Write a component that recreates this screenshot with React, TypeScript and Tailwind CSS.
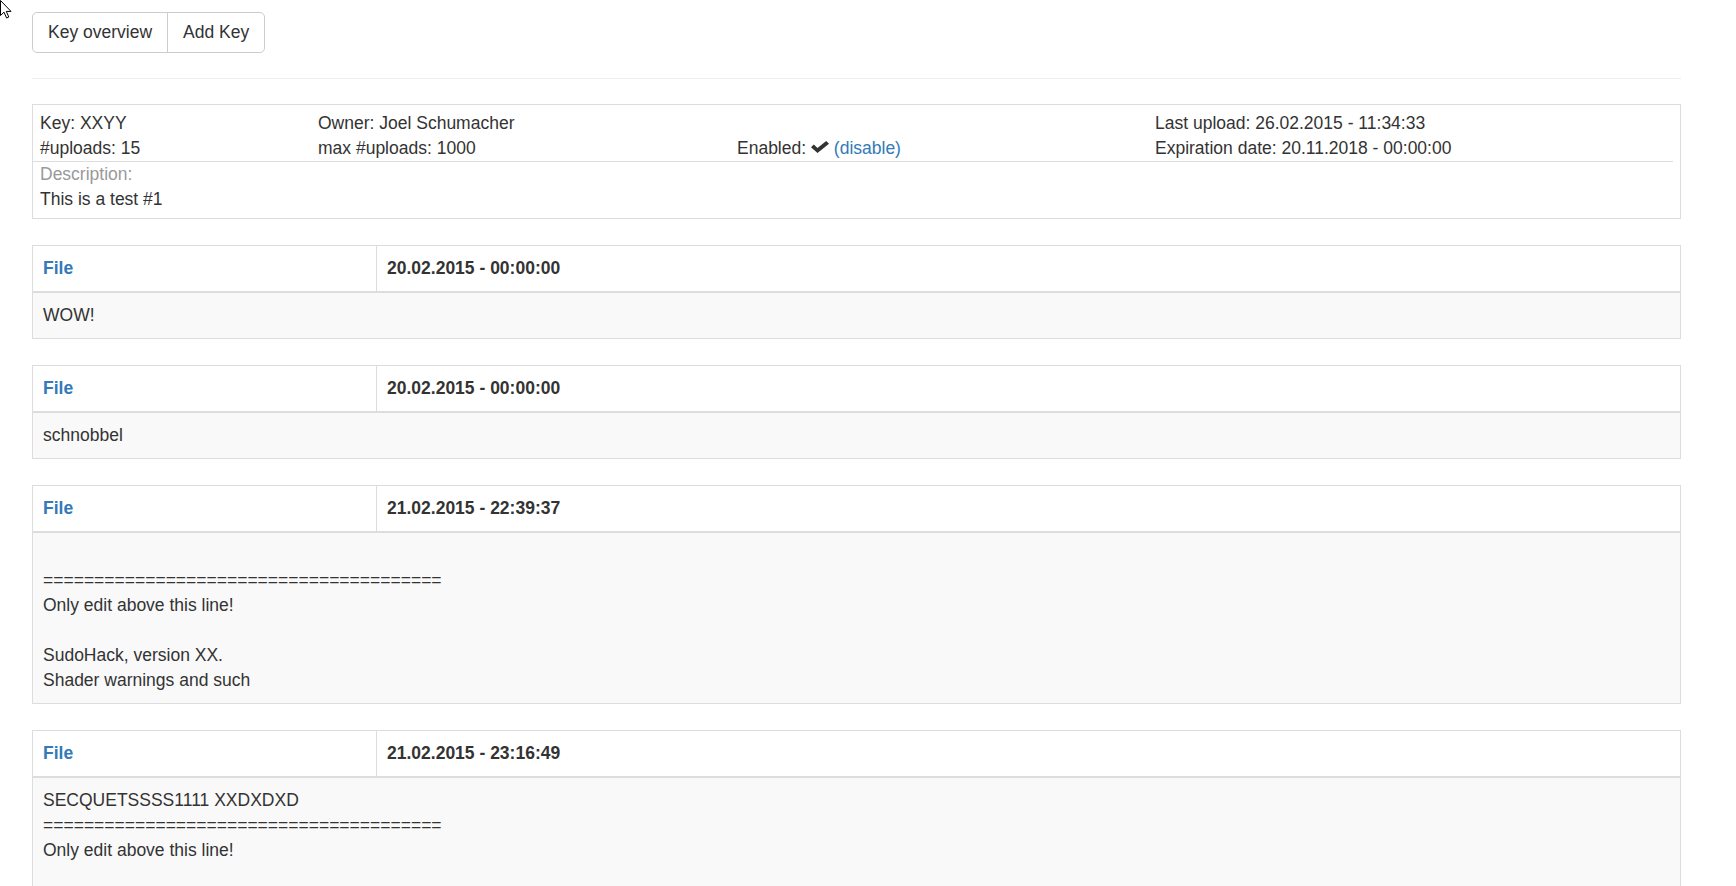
import React from "react";

const EQ = "=======================================";

type Entry = { date: string; lines: string[] };

const entries: Entry[] = [
  { date: "20.02.2015 - 00:00:00", lines: ["WOW!"] },
  { date: "20.02.2015 - 00:00:00", lines: ["schnobbel"] },
  {
    date: "21.02.2015 - 22:39:37",
    lines: ["", EQ, "Only edit above this line!", "", "SudoHack, version XX.", "Shader warnings and such"],
  },
  {
    date: "21.02.2015 - 23:16:49",
    lines: ["SECQUETSSSS1111 XXDXDXD", EQ, "Only edit above this line!", "", ""],
  },
];

function Cursor() {
  return (
    <svg className="absolute left-0 top-0 h-[19px] w-[13px]" viewBox="0 0 13 19">
      <path
        d="M0.5 0.5 L0.5 15.5 L4 12.2 L6.6 18 L8.8 17 L6.3 11.4 L11 11.4 Z"
        fill="#fff"
        stroke="#000"
        strokeWidth="1"
        strokeLinejoin="round"
      />
    </svg>
  );
}

function Check() {
  return (
    <svg className="inline-block h-[12px] w-[18px] align-[1px]" viewBox="0 0 18 12">
      <path d="M0 6.2 L2.8 3.4 L6.5 6.9 L15.2 0 L18 2.8 L6.5 12 Z" fill="#333" />
    </svg>
  );
}

function FilePanel({ entry }: { entry: Entry }) {
  return (
    <div className="mb-[26px] border border-[#ddd]">
      <div className="flex border-b-2 border-[#ddd] bg-white font-bold">
        <div className="w-[344px] border-r border-[#ddd] px-[10px] py-[10px] text-[#337ab7]">File</div>
        <div className="flex-1 px-[10px] py-[10px]">{entry.date}</div>
      </div>
      <div className="bg-[#f9f9f9] px-[10px] py-[10px]">
        {entry.lines.map((l, i) => (
          <div key={i} className="h-[25px] whitespace-pre">
            {l}
          </div>
        ))}
      </div>
    </div>
  );
}

export default function App() {
  return (
    <div className="relative h-[886px] overflow-hidden bg-white font-['Liberation_Sans',Arial,sans-serif] text-[17.5px] leading-[25px] text-[#333]">
      <Cursor />
      <div className="ml-[32px] w-[1649px] pt-[12px]">
        <div className="flex">
          <button className="rounded-l-[5px] border border-[#ccc] bg-white px-[15px] py-[7px] leading-[25px] text-[#333]">
            Key overview
          </button>
          <button className="-ml-px rounded-r-[5px] border border-[#ccc] bg-white px-[15px] py-[7px] leading-[25px] text-[#333]">
            Add Key
          </button>
        </div>
        <hr className="my-[25px] border-0 border-t border-[#eee]" />

        <div className="mb-[26px] border border-[#ddd] pb-[6px] pt-[6px]">
          <div className="grid grid-cols-[278px_419px_418px_1fr] pl-[7px]">
            <div>Key: XXYY</div>
            <div>Owner: Joel Schumacher</div>
            <div></div>
            <div>Last upload: 26.02.2015 - 11:34:33</div>
            <div>#uploads: 15</div>
            <div>max #uploads: 1000</div>
            <div>
              Enabled: <Check /> <a className="text-[#337ab7]">(disable)</a>
            </div>
            <div>Expiration date: 20.11.2018 - 00:00:00</div>
          </div>
          <div className="mr-[7px] h-px bg-[#ddd]" />
          <div className="pl-[7px]">
            <div className="text-[#999]">Description:</div>
            <div>This is a test #1</div>
          </div>
        </div>

        {entries.map((e, i) => (
          <FilePanel key={i} entry={e} />
        ))}
      </div>
    </div>
  );
}
